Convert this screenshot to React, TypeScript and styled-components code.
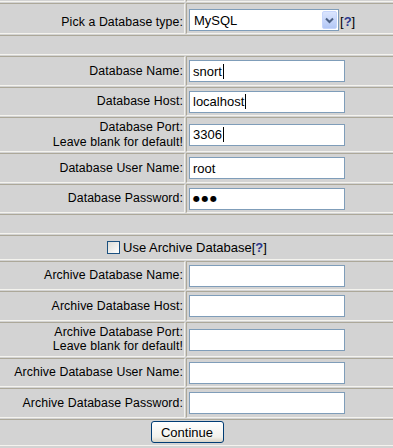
import React from 'react'
import styled, { createGlobalStyle, css } from 'styled-components'

const GlobalStyle = createGlobalStyle`
  html, body {
    margin: 0;
    padding: 0;
    background: #d3d3d3;
    overflow: hidden;
  }
  body {
    font-family: "Liberation Sans", Arial, sans-serif;
    color: #000;
  }
`

// old-school table look: inset cells with 1px spacing
const cell = css`
  box-sizing: border-box;
  background: #d3d3d3;
  border: 1px solid;
  border-color: #aca899 #f4f3ee #f4f3ee #aca899;
`

const Form = styled.div`
  display: grid;
  grid-template-columns: 186px 1fr;
  gap: 1px;
  width: 440px;
  margin: -16.5px 0 0 -1px;
  background: #d3d3d3;
`

const Label = styled.div<{ $offset?: number }>`
  ${cell}
  display: flex;
  flex-direction: column;
  justify-content: center;
  align-items: flex-end;
  padding: ${p => 2 + (p.$offset ?? 0)}px 1px 2px 0;
  font-size: 12.3px;
  line-height: 14.5px;
  letter-spacing: 0.1px;
  text-align: right;
  white-space: nowrap;
`

const CutLabel = styled(Label)`
  height: 18.5px;
`

const Value = styled.div<{ $offset?: number }>`
  ${cell}
  display: flex;
  align-items: center;
  padding: ${p => 3 + (p.$offset ?? 0)}px 2px 2.4px;
`

const FullRow = styled.div<{ $h: number }>`
  ${cell}
  grid-column: 1 / -1;
  height: ${p => p.$h}px;
  display: flex;
  align-items: center;
`

const Centered = styled.div`
  width: 374px;
  display: flex;
  justify-content: center;
  align-items: center;
  font-size: 13px;
`

const Field = styled.div`
  box-sizing: border-box;
  width: 156px;
  height: 22px;
  border: 1px solid #7f9db9;
  background: #fff;
  padding: 0 3px;
  display: flex;
  align-items: center;
  font-size: 13px;
  white-space: pre;
`

const Caret = styled.span`
  display: inline-block;
  width: 1px;
  height: 15px;
  background: #000;
  margin-left: 1px;
`

const Dots = styled.span`
  font-family: "DejaVu Sans", sans-serif;
  font-size: 8px;
  letter-spacing: 1.5px;
`

const Select = styled.div`
  box-sizing: border-box;
  width: 150px;
  height: 22px;
  border: 1px solid #7f9db9;
  background: #fff;
  display: flex;
  align-items: center;
  justify-content: space-between;
  padding: 0 1px 0 4px;
  font-size: 13px;
`

const DropButton = styled.span`
  box-sizing: border-box;
  width: 15px;
  height: 18px;
  border-radius: 2px;
  border: 1px solid #c6d5fc;
  background: linear-gradient(#dbe5fe, #b4c8f6);
  display: flex;
  align-items: center;
  justify-content: center;
`

const Help = styled.span`
  align-self: flex-end;
  margin: 0 0 2px 1px;
  font-size: 13px;
`

const Q = styled.span`
  color: #2b3990;
  font-weight: bold;
`

const Check = styled.span`
  box-sizing: border-box;
  width: 13px;
  height: 13px;
  margin-right: 3px;
  border: 1px solid #1c5180;
  background: linear-gradient(135deg, #dcdcd7, #fff);
`

const Button = styled.button`
  box-sizing: border-box;
  width: 73px;
  height: 22px;
  padding: 0;
  border: 1px solid #003c74;
  border-radius: 3px;
  background: linear-gradient(#fff, #f2f1ec 75%, #d8d3c6);
  font: 13px "Liberation Sans", Arial, sans-serif;
  color: #000;
`

const Chevron = () => (
  <svg width="9" height="7" viewBox="0 0 9 7">
    <path d="M1 1.5 L4.5 5 L8 1.5" fill="none" stroke="#4d6185" strokeWidth="2" />
  </svg>
)

type Row = { label: React.ReactNode; value?: string; caret?: boolean; pass?: boolean }

const mainRows: Row[] = [
  { label: 'Database Name:', value: 'snort', caret: true },
  { label: 'Database Host:', value: 'localhost', caret: true },
  { label: <>Database Port:<br />Leave blank for default!</>, value: '3306', caret: true },
  { label: 'Database User Name:', value: 'root' },
  { label: 'Database Password:', pass: true },
]

const archiveRows: Row[] = [
  { label: 'Archive Database Name:' },
  { label: 'Archive Database Host:' },
  { label: <>Archive Database Port:<br />Leave blank for default!</> },
  { label: 'Archive Database User Name:' },
  { label: 'Archive Database Password:' },
]

const renderRows = (rows: Row[]) =>
  rows.map((r, i) => (
    <React.Fragment key={i}>
      <Label>{r.label}</Label>
      <Value>
        <Field>
          {r.pass ? <Dots>●●●</Dots> : r.value}
          {r.caret && <Caret />}
        </Field>
      </Value>
    </React.Fragment>
  ))

const App: React.FC = () => {
  return (
    <>
      <GlobalStyle />
      <Form>
        {/* row above, scrolled out of view */}
        <CutLabel />
        <Value />

        <Label $offset={7}>Pick a Database type:</Label>
        <Value $offset={2}>
          <Select>
            MySQL
            <DropButton><Chevron /></DropButton>
          </Select>
          <Help>[<Q>?</Q>]</Help>
        </Value>

        <FullRow $h={20} />
        {renderRows(mainRows)}
        <FullRow $h={20} />

        <FullRow $h={25}>
          <Centered>
            <Check />
            Use Archive Database[<Q>?</Q>]
          </Centered>
        </FullRow>

        {renderRows(archiveRows)}

        <FullRow $h={27}>
          <Centered>
            <Button>Continue</Button>
          </Centered>
        </FullRow>
      </Form>
    </>
  )
}

export default App
